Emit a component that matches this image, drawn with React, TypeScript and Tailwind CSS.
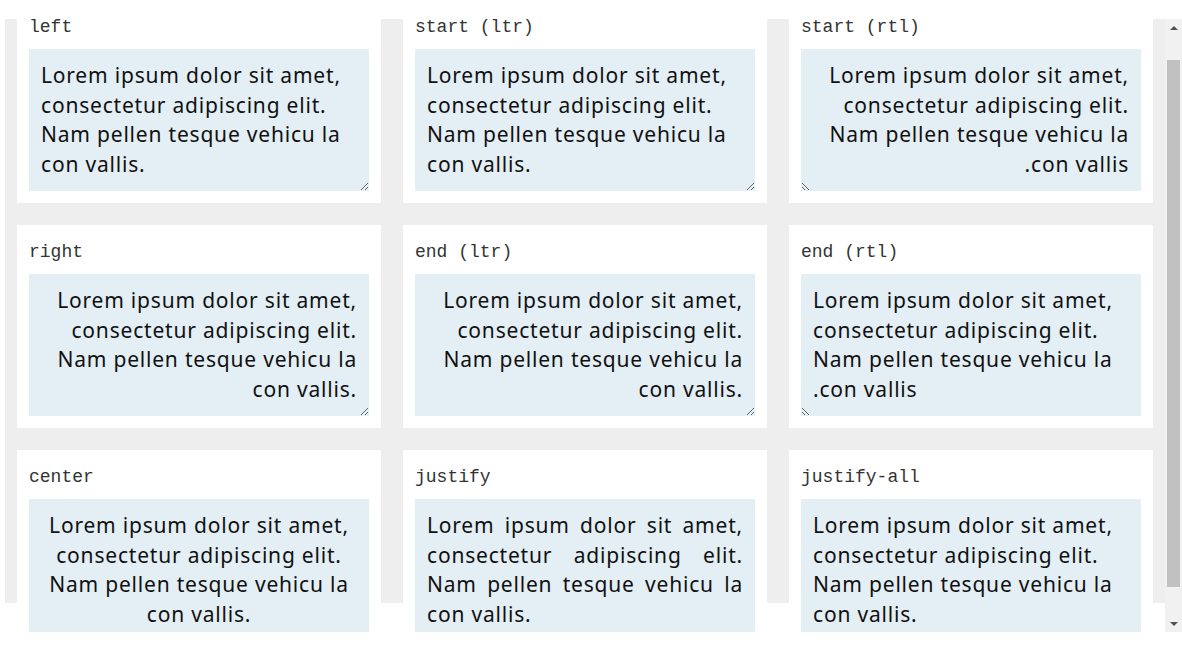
const LOREM =
  "Lorem ipsum dolor sit amet, consectetur adipiscing elit. Nam pellen tesque vehicu la con vallis.";

const CASES = [
  { label: "left", align: "text-left", dir: "ltr" },
  { label: "start (ltr)", align: "text-start", dir: "ltr" },
  { label: "start (rtl)", align: "text-start", dir: "rtl" },
  { label: "right", align: "text-right", dir: "ltr" },
  { label: "end (ltr)", align: "text-end", dir: "ltr" },
  { label: "end (rtl)", align: "text-end", dir: "rtl" },
  { label: "center", align: "text-center", dir: "ltr" },
  { label: "justify", align: "text-justify", dir: "ltr" },
  { label: "justify-all", align: "[text-align:justify-all]", dir: "ltr" },
];

const AlignCard = ({ label, align, dir }: { label: string; align: string; dir: string }) => (
  <div className="bg-white p-3">
    <div className="mb-3 h-[25px] font-['Liberation_Mono',monospace] text-[18px] leading-[31px] text-[#333]">
      {label}
    </div>
    <textarea
      dir={dir}
      readOnly
      defaultValue={LOREM}
      className={`block h-[142px] w-full resize overflow-hidden border-0 bg-[#e3eef5] p-3 font-['Noto_Sans',sans-serif] text-[21px] leading-[29.5px] tracking-[0.8px] text-[#111] outline-none ${align}`}
    />
  </div>
);

const Scrollbar = () => (
  <div className="mt-[19px] flex h-[613px] w-[17px] flex-col bg-[#f1f1f1]">
    <div className="flex h-[17px] items-center justify-center">
      <div className="h-0 w-0 border-x-[4px] border-b-[4px] border-x-transparent border-b-[#505050]" />
    </div>
    <div className="flex-1 px-[2px] pt-[24px]">
      <div className="h-[527px] w-full bg-[#c1c1c1]" />
    </div>
    <div className="flex h-[17px] items-center justify-center">
      <div className="h-0 w-0 border-x-[4px] border-t-[4px] border-x-transparent border-t-[#505050]" />
    </div>
  </div>
);

export default function App() {
  return (
    <div className="flex h-[659px] w-[1182px] items-start overflow-hidden bg-white pl-[5px]">
      <div className="h-[632px] w-[1160px] overflow-hidden px-3 [background:linear-gradient(#eeeeee,#eeeeee)_0_19px/100%_584px_no-repeat]">
        <div className="grid grid-cols-3 gap-[22px]">
          {CASES.map((c) => (
            <AlignCard key={c.label} {...c} />
          ))}
        </div>
      </div>
      <Scrollbar />
    </div>
  );
}
